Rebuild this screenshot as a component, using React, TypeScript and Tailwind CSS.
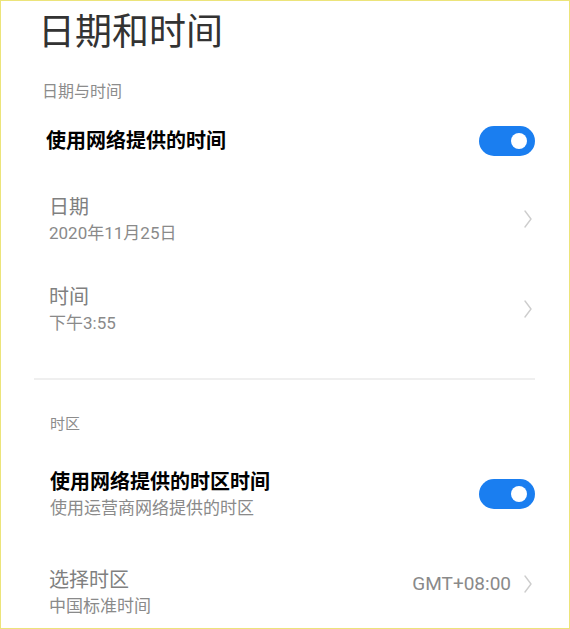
import React from 'react';

const font = { fontFamily: 'Roboto, "Noto Sans CJK SC", "Noto Sans", sans-serif' };

function Toggle() {
  return (
    <div className="flex h-[30px] w-[56px] items-center justify-end rounded-full bg-[#1a7ef0] pr-[8px]">
      <div className="h-[16px] w-[16px] rounded-full bg-white" />
    </div>
  );
}

function Chevron() {
  return (
    <svg width="10" height="18" viewBox="0 0 10 18" fill="none">
      <polyline points="2,1 8,9 2,17" stroke="#cdcdcd" strokeWidth="1.4" strokeLinecap="round" strokeLinejoin="round" />
    </svg>
  );
}

function NavRow({ title, sub, value }: { title: string; sub: string; value?: string }) {
  return (
    <div className={value ? 'flex items-start pl-[48px] pr-[36px]' : 'flex items-center pl-[48px] pr-[36px]'}>
      <div className="flex flex-1 flex-col">
        <span className="text-[20px] leading-[28px] text-[#808080]">{title}</span>
        <span className="text-[17px] leading-[24px] text-[#8a8a8a]">{sub}</span>
      </div>
      {value ? (
        <div className="mt-[5px] flex items-center">
          <span className="mr-[12px] text-[19px] leading-[26px] text-[#8a8a8a]">{value}</span>
          <Chevron />
        </div>
      ) : (
        <Chevron />
      )}
    </div>
  );
}

export default function App() {
  return (
    <div style={font} className="h-[629px] w-[570px] overflow-hidden border border-[#ece47a] bg-white">
      <div className="flex h-[63px] items-center pl-[37px] text-[37px] text-[#333]">日期和时间</div>
      <div className="flex h-[56px] items-center pl-[41px] text-[16px] text-[#8c8c8c]">日期与时间</div>
      <div className="flex h-[42px] items-center justify-between pl-[45px] pr-[34px]">
        <span className="text-[20px] font-bold text-black">使用网络提供的时间</span>
        <Toggle />
      </div>

      <div className="pt-[31px]">
        <NavRow title="日期" sub="2020年11月25日" />
      </div>
      <div className="pt-[38px]">
        <NavRow title="时间" sub="下午3:55" />
      </div>

      <div className="ml-[33px] mr-[34px] mt-[43px] h-[2px] bg-[#efefef]" />

      <div className="pl-[49px] pt-[34px] text-[15px] leading-[20px] text-[#8c8c8c]">时区</div>

      <div className="mt-[34px] flex items-center justify-between pl-[49px] pr-[34px]">
        <div className="flex flex-col">
          <span className="text-[20px] font-bold leading-[28px] text-black">使用网络提供的时区时间</span>
          <span className="text-[17px] leading-[24px] text-[#8a8a8a]">使用运营商网络提供的时区</span>
        </div>
        <Toggle />
      </div>

      <div className="pt-[46px]">
        <NavRow title="选择时区" sub="中国标准时间" value="GMT+08:00" />
      </div>
    </div>
  );
}
